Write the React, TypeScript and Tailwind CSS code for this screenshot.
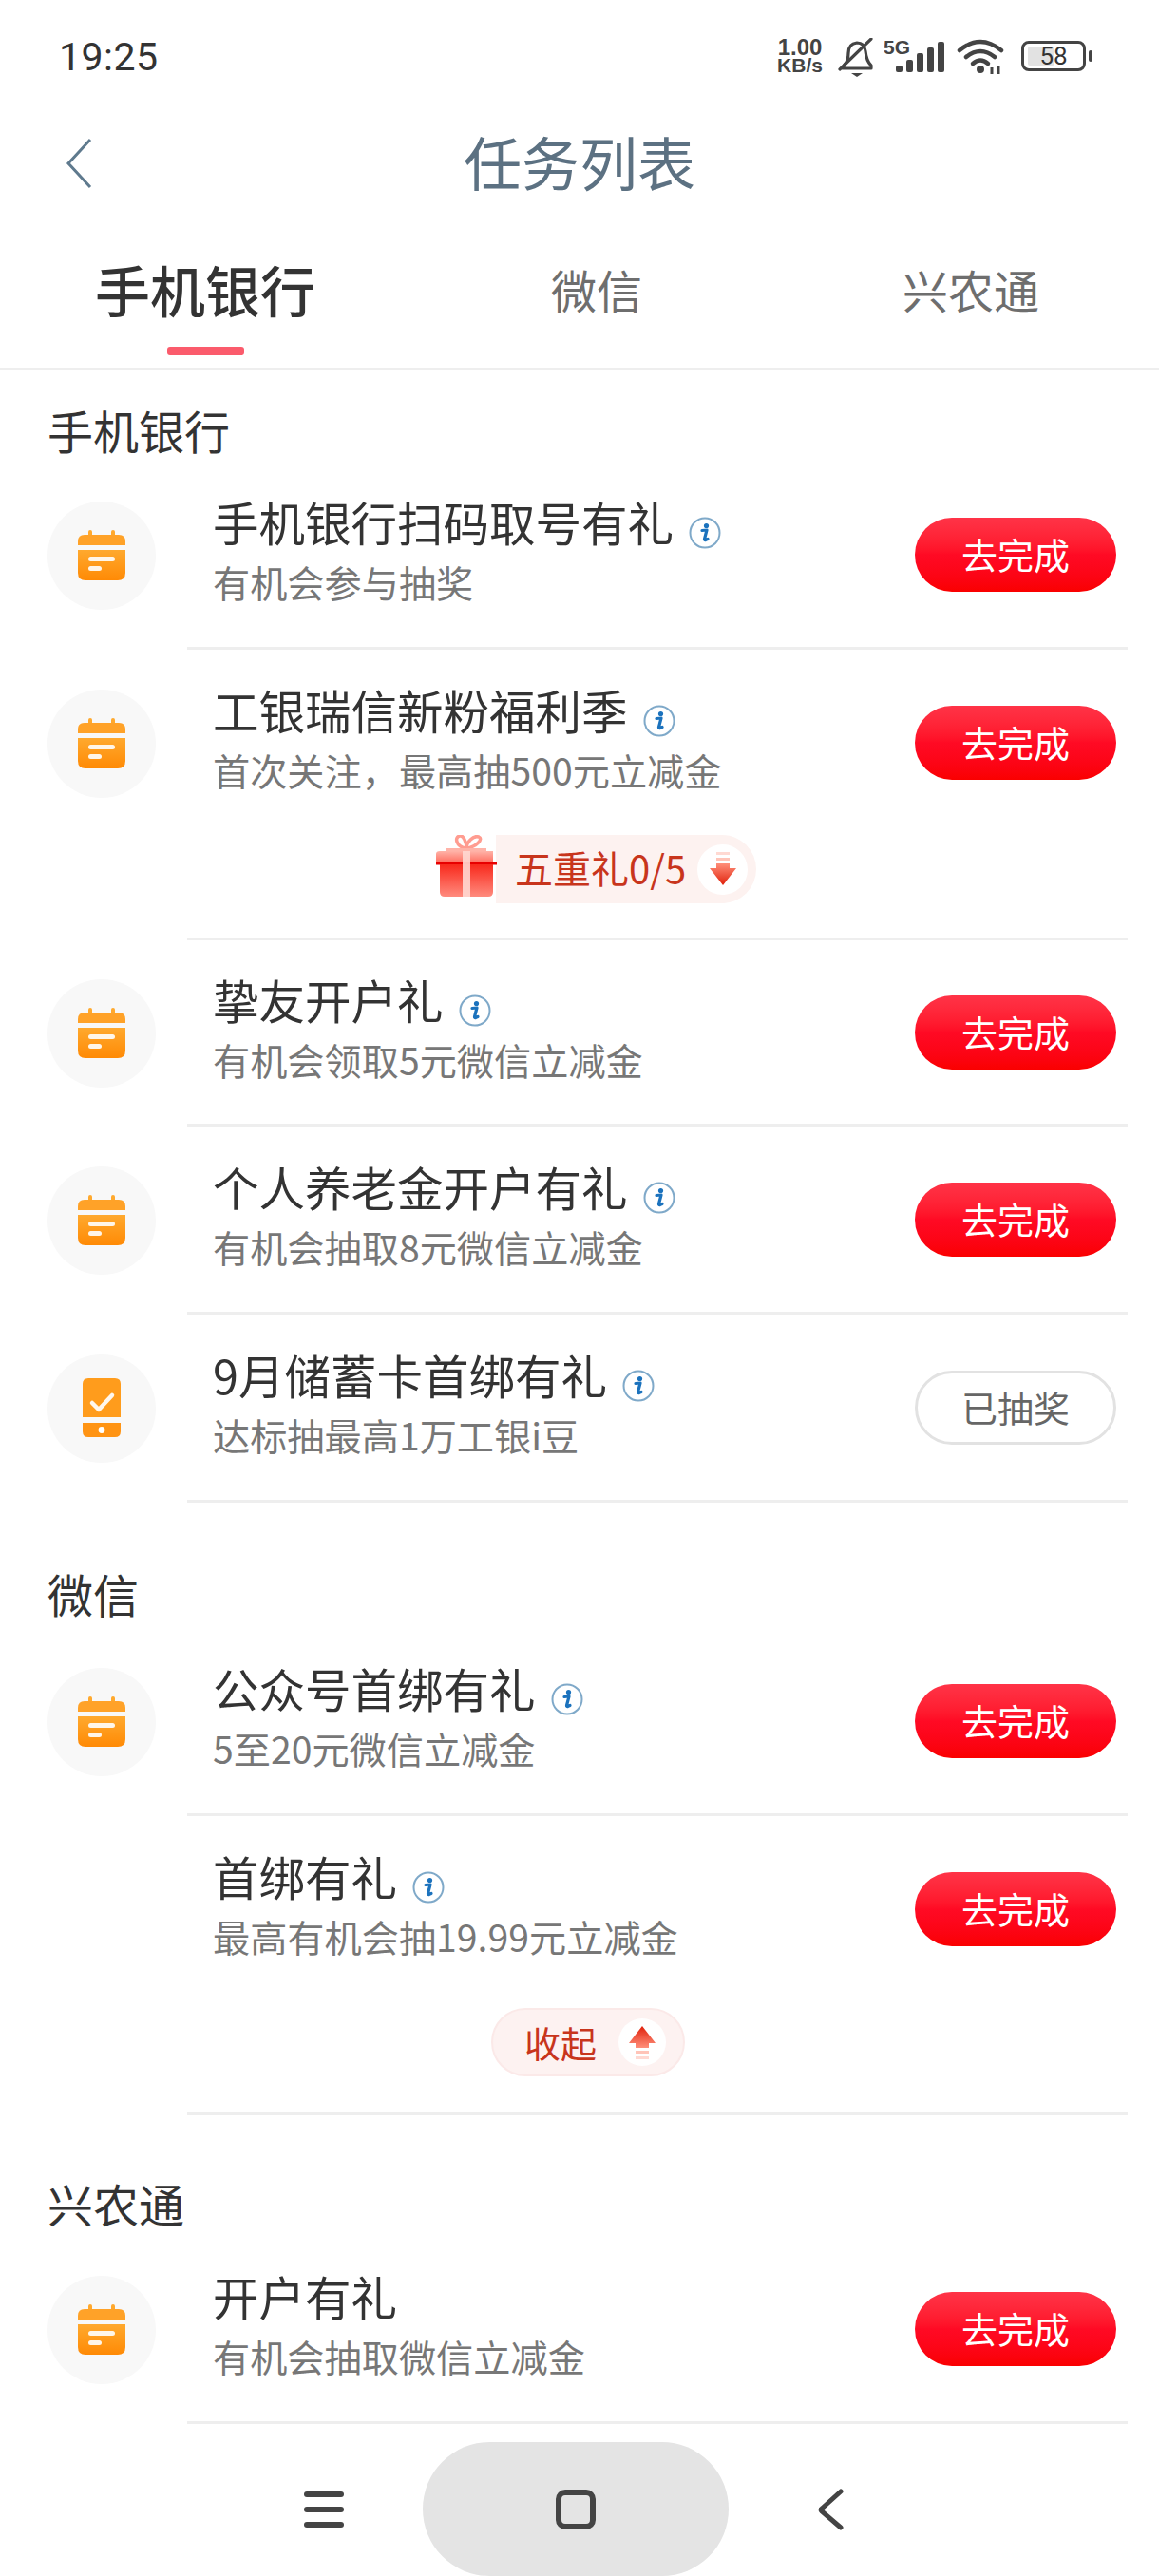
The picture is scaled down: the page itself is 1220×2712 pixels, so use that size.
import React from 'react';

const CJK = "font-['Noto_Sans_CJK_SC','Noto_Sans',sans-serif]";

const InfoIcon: React.FC = () => (
  <svg width="34" height="34" viewBox="0 0 34 34" className="ml-[16px] mt-[25px] shrink-0">
    <circle cx="17" cy="17" r="15.5" fill="none" stroke="#7fa9c9" strokeWidth="2" />
    <circle cx="18.5" cy="9.5" r="2.6" fill="#1b72bd" />
    <path d="M14 14.5 L19 14 L16.5 23.5 Q16.3 25 18 24.4 L20 23.5" fill="none" stroke="#1b72bd" strokeWidth="3.2" strokeLinecap="round" strokeLinejoin="round" />
  </svg>
);

const CalendarIcon: React.FC = () => (
  <svg width="52" height="54" viewBox="0 0 52 54">
    <defs>
      <linearGradient id="orangeFill" x1="0" y1="0" x2="0" y2="1">
        <stop offset="0" stopColor="#ffa92e" />
        <stop offset="1" stopColor="#ff8a05" />
      </linearGradient>
    </defs>
    <rect x="12" y="0" width="4" height="8" rx="2" fill="#ffa92e" />
    <rect x="36" y="0" width="4" height="8" rx="2" fill="#ffa92e" />
    <path d="M8 5 H44 Q51 5 51 12 V16 H1 V12 Q1 5 8 5 Z" fill="#ffa228" />
    <path d="M1 21 H51 V45 Q51 53 43 53 H9 Q1 53 1 45 Z" fill="url(#orangeFill)" />
    <rect x="12" y="28" width="28" height="5" rx="2.5" fill="#fff" opacity="0.9" />
    <rect x="12" y="38" width="14" height="5" rx="2.5" fill="#fff" opacity="0.9" />
  </svg>
);

const PhoneCheckIcon: React.FC = () => (
  <svg width="42" height="64" viewBox="0 0 42 64">
    <path d="M7 0 H35 Q41 0 41 6 V41 H1 V6 Q1 0 7 0 Z" fill="#ff9c1c" />
    <path d="M1 47 H41 V56 Q41 62 35 62 H7 Q1 62 1 56 Z" fill="#ff9414" />
    <path d="M11 26 L18 33 L32 18" fill="none" stroke="#fff" strokeWidth="4.5" strokeLinecap="round" strokeLinejoin="round" opacity="0.92" />
    <circle cx="21" cy="54.5" r="3.4" fill="#fff" />
  </svg>
);

const GiftIcon: React.FC = () => (
  <svg width="66" height="66" viewBox="0 0 66 66" className="shrink-0 relative z-10">
    <defs>
      <linearGradient id="giftBody" x1="0" y1="0" x2="0" y2="1">
        <stop offset="0" stopColor="#f8291c" />
        <stop offset="1" stopColor="#ff8b7e" />
      </linearGradient>
      <linearGradient id="giftLid" x1="0" y1="0" x2="0" y2="1">
        <stop offset="0" stopColor="#ffb3a8" />
        <stop offset="1" stopColor="#ff6a5c" />
      </linearGradient>
    </defs>
    <path d="M32 14 C22 12 20 2 26 1 C30 0 33 8 33 14 C33 8 40 0 46 2 C51 4 44 12 34 14" fill="none" stroke="#ff9c90" strokeWidth="3.5" />
    <rect x="12" y="14" width="42" height="3" fill="#ffb3a8" />
    <path d="M5 17 H61 V30 H1 V20 Q1 17 5 17 Z" fill="url(#giftLid)" />
    <rect x="1" y="29" width="64" height="2.5" fill="#e80000" />
    <path d="M5 31 H61 V60 Q61 65 56 65 H10 Q5 65 5 60 Z" fill="url(#giftBody)" />
    <rect x="29" y="17" width="8" height="48" fill="#ffd8d2" opacity="0.9" />
  </svg>
);

const ArrowIcon: React.FC<{ up?: boolean }> = ({ up }) => (
  <svg width="28" height="36" viewBox="0 0 28 36" className={up ? 'rotate-180' : ''}>
    <defs>
      <linearGradient id="arrowFill" x1="0" y1="0" x2="0" y2="1">
        <stop offset="0" stopColor="#ff8f7a" />
        <stop offset="1" stopColor="#e0200a" />
      </linearGradient>
    </defs>
    <rect x="7" y="0" width="14" height="3" fill="#ffd9d2" />
    <rect x="7" y="6" width="14" height="3" fill="#ffc4b8" />
    <path d="M7 12 H21 V17 H28 L14 35 L0 17 H7 Z" fill="url(#arrowFill)" />
  </svg>
);

const SignalBar: React.FC<{ h: string }> = ({ h }) => <div className={`w-[7px] rounded-[2px] bg-[#444] ${h}`} />;

const StatusBar: React.FC = () => (
  <div className="h-[120px] shrink-0 flex items-start justify-between pt-[40px] pl-[62px] pr-[70px] text-[#333]">
    <span className="text-[41px] leading-[40px] font-['Roboto',sans-serif] tracking-[0.5px]">19:25</span>
    <div className="flex items-start text-[#444]">
      <div className="w-[52px] font-['Liberation_Sans',sans-serif] font-bold text-center">
        <div className="text-[24px] leading-[18px] mt-[1px]">1.00</div>
        <div className="text-[21px] leading-[19px]">KB/s</div>
      </div>
      <svg width="40" height="42" viewBox="0 0 40 42" className="ml-[13px]">
        <path d="M8 28 Q12 24 12 16 Q12 6 21 5 Q29 5 30 14 Q31 24 36 29 L36 32 H6 Z" fill="none" stroke="#444" strokeWidth="3.2" strokeLinejoin="round" />
        <path d="M3 33 L36 1" stroke="#444" strokeWidth="3.2" strokeLinecap="round" />
        <path d="M15 37 H27 L21 41 Z" fill="#444" />
      </svg>
      <div className="relative w-[66px] h-[40px] ml-[9px]">
        <span className="absolute left-0 top-[1px] text-[21px] leading-[18px] font-bold font-['Liberation_Sans',sans-serif]">5G</span>
        <div className="absolute right-[2px] top-[3px] h-[33px] flex items-end gap-[4px]">
          <SignalBar h="h-[7px]" />
          <SignalBar h="h-[13px]" />
          <SignalBar h="h-[20px]" />
          <SignalBar h="h-[26px]" />
          <SignalBar h="h-[32px]" />
        </div>
      </div>
      <svg width="52" height="38" viewBox="0 0 52 38" className="ml-[11px] mt-[1px]">
        <path d="M3 12 Q25 -6 47 12" fill="none" stroke="#444" strokeWidth="4.5" strokeLinecap="round" />
        <path d="M10 19 Q25 7 40 19" fill="none" stroke="#444" strokeWidth="4.5" strokeLinecap="round" />
        <path d="M17 26 Q25 19 33 26" fill="none" stroke="#444" strokeWidth="4.5" strokeLinecap="round" />
        <circle cx="25" cy="32" r="4" fill="#444" />
        <path d="M37 30 V37 M44 28 V37" stroke="#444" strokeWidth="3" />
      </svg>
      <div className="relative w-[68px] h-[32px] ml-[16px] mt-[3px] rounded-[8px] border-[3px] border-[#444] flex items-center justify-center">
        <div className="absolute left-[4px] top-[3px] bottom-[3px] w-[28px] bg-[#e2e2e2] rounded-[2px]" />
        <span className="relative text-[26px] leading-[26px] font-['Roboto',sans-serif] text-[#333]">58</span>
      </div>
      <div className="w-[4px] h-[12px] ml-[3px] mt-[13px] rounded-[2px] bg-[#444]" />
    </div>
  </div>
);

const TitleBar: React.FC = () => (
  <div className="relative h-[104px] shrink-0 flex items-center justify-center pb-[6px]">
    <svg width="34" height="58" viewBox="0 0 34 58" className="absolute left-[67px] top-[23px]">
      <path d="M28 4 L5 29 L28 54" fill="none" stroke="#5f7a8e" strokeWidth="3" />
    </svg>
    <span className="text-[61px] leading-none text-[#5c7182]">任务列表</span>
  </div>
);

const Tabs: React.FC = () => (
  <div className="h-[166px] shrink-0 flex border-b-[3px] border-[#eeeeee]">
    <div className="relative w-[432px] flex justify-center pt-[47px]">
      <span className="text-[58px] leading-[66px] font-medium text-[#333]">手机银行</span>
      <div className="absolute left-[176px] top-[141px] w-[81px] h-[9px] rounded-[3px] bg-[#fb5b6c]" />
    </div>
    <div className="w-[392px] flex justify-center pt-[53px]">
      <span className="text-[48px] leading-[54px] text-[#6e6e6e]">微信</span>
    </div>
    <div className="flex-1 flex justify-center pt-[53px]">
      <span className="text-[48px] leading-[54px] text-[#6e6e6e]">兴农通</span>
    </div>
  </div>
);

type Task = {
  title: string;
  sub: string;
  icon?: 'calendar' | 'phone';
  done?: boolean;
  tight?: boolean;
  noInfo?: boolean;
  extra?: React.ReactNode;
};

const TaskRow: React.FC<{ task: Task }> = ({ task }) => (
  <div className="flex">
    <div className={`w-[197px] shrink-0 flex items-center pl-[50px] ${task.tight ? 'h-[196px]' : 'h-[198px]'}`}>
      {task.icon && (
        <div className="w-[114px] h-[114px] rounded-full bg-[#f8f8f8] flex items-center justify-center">
          {task.icon === 'calendar' ? <CalendarIcon /> : <PhoneCheckIcon />}
        </div>
      )}
    </div>
    <div className="flex-1 mr-[33px] border-b-[3px] border-[#eeeeee]">
      <div className={`flex items-center justify-between pr-[12px] ${task.tight ? 'h-[193px]' : 'h-[195px]'}`}>
        <div className="pl-[27px] pb-[12px]">
          <div className="flex items-start h-[60px]">
            <span className="text-[48.5px] leading-[60px] text-[#333] whitespace-nowrap">{task.title}</span>
            {!task.noInfo && <InfoIcon />}
          </div>
          <div className="text-[39.2px] leading-[50px] mt-[8px] text-[#777] whitespace-nowrap">{task.sub}</div>
        </div>
        {task.done ? (
          <div className="w-[212px] h-[78px] pb-[3px] rounded-full border-[3px] border-[#e2e2e2] flex items-center justify-center text-[38px] text-[#666]">已抽奖</div>
        ) : (
          <div className="w-[212px] h-[78px] pb-[3px] rounded-full bg-gradient-to-b from-[#ff3347] via-[#ff0a24] to-[#fa0000] flex items-center justify-center text-[38px] text-white">去完成</div>
        )}
      </div>
      {task.extra}
    </div>
  </div>
);

const SectionTitle: React.FC<{ className: string; children: React.ReactNode }> = ({ className, children }) => (
  <div className={`${className} pl-[50px] text-[48px] leading-[60px] text-[#333]`}>{children}</div>
);

const FiveGifts: React.FC = () => (
  <div className="h-[108px] flex items-start pl-[261px]">
    <GiftIcon />
    <div className="h-[72px] -ml-[2px] pl-[20px] pr-[9px] rounded-r-full bg-[#fdf2f0] flex items-center">
      <span className="text-[40px] leading-none pb-[5px] text-[#c8351c]">五重礼0/5</span>
      <div className="w-[53px] h-[53px] ml-[12px] rounded-full bg-white flex items-center justify-center">
        <ArrowIcon />
      </div>
    </div>
  </div>
);

const Collapse: React.FC = () => (
  <div className="h-[117px] pt-[7px] pl-[320px]">
    <div className="w-[204px] h-[72px] pl-[33px] pr-[18px] rounded-full bg-[#fdf2f1] border-2 border-[#fbe9e8] flex items-center justify-between">
      <span className="text-[38px] leading-none text-[#c8351c]">收起</span>
      <div className="w-[50px] h-[50px] rounded-full bg-white flex items-center justify-center">
        <ArrowIcon up />
      </div>
    </div>
  </div>
);

const bankTasks: Task[] = [
  { title: '手机银行扫码取号有礼', sub: '有机会参与抽奖', icon: 'calendar' },
  { title: '工银瑞信新粉福利季', sub: '首次关注，最高抽500元立减金', icon: 'calendar', extra: <FiveGifts /> },
  { title: '挚友开户礼', sub: '有机会领取5元微信立减金', icon: 'calendar', tight: true },
  { title: '个人养老金开户有礼', sub: '有机会抽取8元微信立减金', icon: 'calendar' },
  { title: '9月储蓄卡首绑有礼', sub: '达标抽最高1万工银i豆', icon: 'phone', done: true },
];

const wechatTasks: Task[] = [
  { title: '公众号首绑有礼', sub: '5至20元微信立减金', icon: 'calendar' },
  { title: '首绑有礼', sub: '最高有机会抽19.99元立减金', extra: <Collapse /> },
];

const NavBar: React.FC = () => (
  <div className="h-[141px] shrink-0 flex items-center pl-[320px] bg-white">
    <div className="w-[42px] flex flex-col gap-[10px]">
      <div className="h-[6px] rounded-full bg-[#444]" />
      <div className="h-[6px] rounded-full bg-[#444]" />
      <div className="h-[6px] rounded-full bg-[#444]" />
    </div>
    <div className="w-[322px] h-[141px] ml-[83px] rounded-[72px] bg-[#e4e4e4] flex items-center justify-center">
      <div className="w-[42px] h-[42px] rounded-[10px] border-[6px] border-[#444]" />
    </div>
    <svg width="30" height="44" viewBox="0 0 30 44" className="ml-[92px]">
      <path d="M26 3 L6 21 Q4 22 6 24 L26 41" fill="none" stroke="#444" strokeWidth="5" strokeLinecap="round" />
    </svg>
  </div>
);

const App: React.FC = () => (
  <div className={`w-[1220px] h-[2712px] overflow-hidden bg-white flex flex-col ${CJK}`}>
    <StatusBar />
    <TitleBar />
    <Tabs />
    <div className="flex-1 min-h-0">
      <SectionTitle className="pt-[32px] pb-[4px]">手机银行</SectionTitle>
      {bankTasks.map(t => <TaskRow key={t.title} task={t} />)}
      <SectionTitle className="pt-[65px] pb-[7px]">微信</SectionTitle>
      {wechatTasks.map(t => <TaskRow key={t.title} task={t} />)}
      <SectionTitle className="pt-[62px] pb-[5px]">兴农通</SectionTitle>
      <TaskRow task={{ title: '开户有礼', sub: '有机会抽取微信立减金', icon: 'calendar', noInfo: true }} />
    </div>
    <NavBar />
  </div>
);

export default App;
